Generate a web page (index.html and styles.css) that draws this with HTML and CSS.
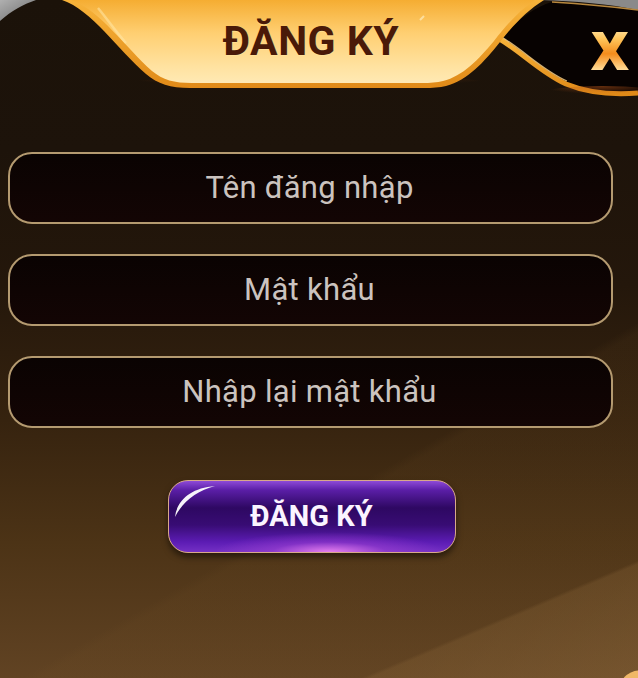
FILE: index.html
```html
<!DOCTYPE html>
<html lang="vi">
<head>
<meta charset="utf-8">
<title>Đăng ký</title>
<link rel="stylesheet" href="styles.css">
</head>
<body>
<div class="modal">
  <header class="header">
    <svg class="header-art" width="638" height="110" viewBox="0 0 638 110" aria-hidden="true">
      <defs>
        <linearGradient id="gold" x1="0" y1="0" x2="0" y2="1">
          <stop offset="0" stop-color="#f5ad32"/>
          <stop offset="0.4" stop-color="#ffcf72"/>
          <stop offset="0.8" stop-color="#ffe2a0"/>
          <stop offset="1" stop-color="#ffe9b4"/>
        </linearGradient>
        <linearGradient id="rim" x1="0" y1="0" x2="0" y2="1">
          <stop offset="0" stop-color="#f7b33a"/>
          <stop offset="1" stop-color="#e08a18"/>
        </linearGradient>
        <linearGradient id="gray" x1="0" y1="0" x2="1" y2="1">
          <stop offset="0" stop-color="#b0b0b0"/>
          <stop offset="1" stop-color="#6a6a6a"/>
        </linearGradient>
        <radialGradient id="glow" cx="0.5" cy="0" r="0.5" fx="0.5" fy="0">
          <stop offset="0" stop-color="#b4541a" stop-opacity="0.55"/>
          <stop offset="1" stop-color="#b4541a" stop-opacity="0"/>
        </radialGradient>
      </defs>
      <!-- gray top-left piece -->
      <path d="M0 0 H36 C24 4 11 11 0 21 Z" fill="url(#gray)"/>
      <!-- gray top-right strip -->
      <path d="M540 0 H638 V10 C610 4 575 1 540 0 Z" fill="#8a8a8a"/>
      <!-- top right dark piece -->
      <path d="M500 40 C515 22 532 8 552 2 C585 4 615 7 638 10 V92 C612 94 588 92 566 84 C540 72 522 52 500 40 Z" fill="#070201"/>
      <path d="M552 2 C585 4 615 7 638 10" stroke="#b8883e" stroke-width="1.5" fill="none"/>
      <!-- rim on dark piece -->
      <path d="M498 38 C522 52 540 72 566 84 C588 93 612 95 638 93" stroke="url(#rim)" stroke-width="5" fill="none"/>
      <path d="M500 36 C524 50 542 70 567 81" stroke="#ffd890" stroke-width="1.2" fill="none" opacity="0.8"/>
      <!-- glow under banner -->
      <ellipse cx="310" cy="88" rx="200" ry="14" fill="url(#glow)"/>
      <ellipse cx="602" cy="94" rx="60" ry="8" fill="url(#glow)"/>
      <!-- gold banner -->
      <path d="M62 0 H544 C528 10 514 24 500 42 C484 62 468 80 446 86 C440 87.5 432 88 424 88 H190 C170 88 158 84 146 74 C118 50 92 10 62 0 Z" fill="url(#rim)"/>
      <path d="M71 0 H535 C520 10 507 24 494 41 C478 60 463 76 443 81 C437 82.5 430 83 422 83 H192 C174 83 163 80 152 71 C126 48 100 10 71 0 Z" fill="url(#gold)"/>
      <!-- shines -->
      <path d="M98 8 C108 20 116 32 126 43" stroke="#ffe7a8" stroke-width="2.5" fill="none" opacity="0.55"/>
      <path d="M420 20 L424 16" stroke="#fff4d0" stroke-width="2" opacity="0.6"/>
    </svg>
    <h1 class="title">ĐĂNG KÝ</h1>
    <span class="close">X</span>
  </header>

  <form class="form">
    <div class="field">Tên đăng nhập</div>
    <div class="field">Mật khẩu</div>
    <div class="field">Nhập lại mật khẩu</div>
    <div class="actions">
      <button type="button" class="submit">
        <svg class="shine" width="50" height="40" viewBox="0 0 50 40" aria-hidden="true">
          <path d="M4 35 C6 18 20 6 44 4 C26 9 12 19 4 35 Z" fill="#ffffff" opacity="0.95"/>
        </svg>
        ĐĂNG KÝ
      </button>
    </div>
  </form>
  <span class="corner-glint"></span>
</div>
</body>
</html>
```

FILE: styles.css
```css
* { box-sizing: border-box; }
html, body { margin: 0; padding: 0; }
body {
  width: 638px;
  height: 678px;
  overflow: hidden;
  font-family: Roboto, "Noto Sans", "Liberation Sans", sans-serif;
  background:
    linear-gradient(157deg, rgba(0,0,0,0) 0%, rgba(0,0,0,0) 87.6%, rgba(130,95,52,0.35) 88%, rgba(140,104,60,0.45) 100%),
    linear-gradient(150deg, rgba(0,0,0,0) 0%, rgba(0,0,0,0) 66%, rgba(120,85,40,0.1) 67%, rgba(120,85,40,0.1) 100%),
    linear-gradient(180deg, #1b1209 0%, #1d130a 22%, #24170b 42%, #36230f 62%, #4c3316 80%, #614323 100%);
}
.modal {
  position: relative;
  height: 678px;
}
.header {
  position: relative;
  height: 100px;
  display: flex;
  align-items: flex-start;
  justify-content: center;
}
.header-art {
  position: absolute;
  left: 0;
  top: 0;
}
.title {
  position: relative;
  margin: 17px 0 0 -16px;
  font-size: 41px;
  font-weight: 700;
  color: #4a1a08;
  letter-spacing: 0.5px;
  text-shadow: 0 1px 0 rgba(255,230,160,0.6);
}
.close {
  position: absolute;
  right: 9px;
  top: 23px;
  font-size: 53px;
  font-weight: 900;
  font-family: "Open Sans", Roboto, sans-serif;
  line-height: 1;
  background: linear-gradient(180deg, #fff2c8 0%, #ffc55a 30%, #f48c1c 58%, #ffd48a 85%, #fff0c8 100%);
  -webkit-background-clip: text;
  background-clip: text;
  color: transparent;
}
.form {
  margin: 0;
  padding: 52px 25px 0 8px;
  display: flex;
  flex-direction: column;
  gap: 30px;
}
.field {
  height: 72px;
  border: 2px solid #b49a70;
  border-radius: 24px;
  background: linear-gradient(180deg, #0a0302 0%, #130504 100%);
  color: #cbc3bf;
  font-size: 31px;
  letter-spacing: 0.3px;
  display: flex;
  align-items: center;
  justify-content: center;
  padding: 0 2px 2px 0;
}
.actions {
  display: flex;
  justify-content: center;
  margin-top: 22px;
  padding-left: 2px;
}
.submit {
  position: relative;
  width: 288px;
  height: 73px;
  border: 1.5px solid #d8a88a;
  border-radius: 20px;
  font-family: Roboto, "Noto Sans", sans-serif;
  font-size: 29px;
  font-weight: 700;
  color: #fbf4ff;
  background:
    radial-gradient(ellipse 40% 28% at 56% 100%, rgba(235,130,240,0.95) 0%, rgba(170,70,215,0.45) 50%, rgba(0,0,0,0) 100%),
    linear-gradient(180deg, #8e4ad8 0%, #5a1ea6 13%, #2e0862 38%, #380c74 62%, #5c1cb4 86%, #7430c4 100%);
  box-shadow: 0 4px 6px rgba(0,0,0,0.5);
  overflow: hidden;
  padding: 0 0 2px 0;
}
.shine {
  position: absolute;
  left: 2px;
  top: 1px;
}
.corner-glint {
  position: absolute;
  right: -6px;
  bottom: -4px;
  width: 22px;
  height: 10px;
  border-radius: 50%;
  background: #f0b868;
  transform: rotate(-25deg);
}
```
